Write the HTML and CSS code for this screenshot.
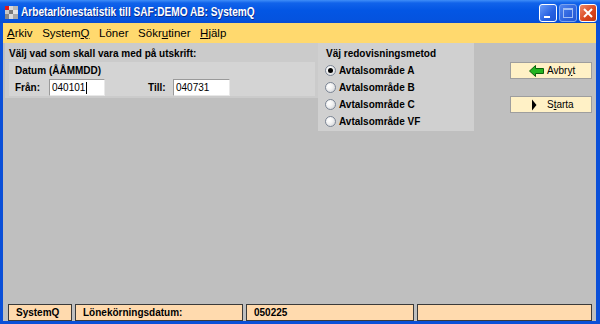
FILE: index.html
```html
<!DOCTYPE html>
<html lang="sv">
<head>
    <meta charset="UTF-8">
    <title>Arbetarlönestatistik till SAF:DEMO AB: SystemQ</title>
    <link rel="stylesheet" href="styles.css">
</head>
<body>

<div class="window">
    <div class="titlebar">
        <svg class="app-icon" width="13" height="13" viewBox="0 0 13 13">
            <rect x="0" y="0" width="13" height="13" fill="#9a9a9a"/>
            <rect x="0" y="0" width="4" height="4" fill="#e01818"/>
            <rect x="4" y="0" width="4" height="4" fill="#d8d8d8"/>
            <rect x="8" y="0" width="5" height="4" fill="#b8b8b8"/>
            <rect x="0" y="4" width="4" height="4" fill="#c8c8c8"/>
            <rect x="4" y="4" width="4" height="4" fill="#7a7a7a"/>
            <rect x="8" y="4" width="5" height="4" fill="#e4e4e4"/>
            <rect x="0" y="8" width="4" height="5" fill="#888"/>
            <rect x="4" y="8" width="4" height="5" fill="#dcdcdc"/>
            <rect x="8" y="8" width="5" height="5" fill="#a8a8a8"/>
        </svg>
        <span class="title">Arbetarlönestatistik till SAF:DEMO AB: SystemQ</span>
        <div class="caption-buttons">
            <span class="cbtn cbtn-min">
                <svg width="16" height="16" viewBox="0 0 16 16"><rect x="4" y="11" width="6" height="2" fill="#fff"/></svg>
            </span>
            <span class="cbtn cbtn-max">
                <svg width="16" height="16" viewBox="0 0 16 16"><rect x="3.5" y="3.5" width="9" height="9" fill="none" stroke="#9fbdf4" stroke-width="1"/><rect x="3.5" y="3.5" width="9" height="1.5" fill="#9fbdf4"/></svg>
            </span>
            <span class="cbtn cbtn-close">
                <svg width="16" height="16" viewBox="0 0 16 16"><path d="M4 4 L12 12 M12 4 L4 12" stroke="#fff" stroke-width="2"/></svg>
            </span>
        </div>
    </div>

    <div class="menubar">
        <span class="menu-item"><u>A</u>rkiv</span>
        <span class="menu-item">System<u>Q</u></span>
        <span class="menu-item">Löner</span>
        <span class="menu-item">Sökr<u>u</u>tiner</span>
        <span class="menu-item"><u>H</u>jälp</span>
    </div>

    <div class="content">
        <div class="panel panel-print">
            <div class="panel-title">Välj vad som skall vara med på utskrift:</div>
            <div class="date-box">
                <div class="box-title">Datum (ÅÅMMDD)</div>
                <div class="date-row">
                    <span class="label label-from">Från:</span>
                    <div class="field">040101<span class="caret"></span></div>
                    <span class="label label-to">Till:</span>
                    <div class="field field-to">040731</div>
                </div>
            </div>
        </div>

        <div class="panel panel-method">
            <div class="panel-title">Väj redovisningsmetod</div>
            <div class="radio-row"><span class="radio checked"></span>Avtalsområde A</div>
            <div class="radio-row"><span class="radio"></span>Avtalsområde B</div>
            <div class="radio-row"><span class="radio"></span>Avtalsområde C</div>
            <div class="radio-row"><span class="radio"></span>Avtalsområde VF</div>
        </div>

        <div class="actions">
            <div class="btn">
                <span class="btn-icon">
                    <svg width="15" height="12" viewBox="0 0 15 12"><polygon points="0.5,6 6.5,0.5 6.5,3.5 14.5,3.5 14.5,8.5 6.5,8.5 6.5,11.5" fill="#22b422" stroke="#0b620b" stroke-width="1"/></svg>
                </span>
                <span>Avbr<u>y</u>t</span>
            </div>
            <div class="btn">
                <span class="btn-icon">
                    <svg width="15" height="12" viewBox="0 0 15 12"><polygon points="3,0.5 7.5,6 3,11.5" fill="#000"/></svg>
                </span>
                <span>S<u>t</u>arta</span>
            </div>
        </div>
    </div>

    <div class="statusbar">
        <div class="status-cell cell-app">SystemQ</div>
        <div class="status-cell cell-label">Lönekörningsdatum:</div>
        <div class="status-cell cell-date">050225</div>
        <div class="status-cell cell-empty"></div>
    </div>
</div>

</body>
</html>
```

FILE: styles.css
```css
body {
    margin: 0;
    font-family: "Liberation Sans", Arial, sans-serif;
}

.window {
    width: 600px;
    height: 324px;
    display: flex;
    flex-direction: column;
    background: #0a4fd8;
    box-sizing: border-box;
    padding-bottom: 3px;
}

/* title bar */
.titlebar {
    height: 23px;
    flex-shrink: 0;
    display: flex;
    align-items: center;
    background: linear-gradient(#3f8ef8 0, #1163ea 3px, #0356e4 45%, #0453df 85%, #0a4bd0 100%);
    color: #fff;
}

.app-icon {
    margin-left: 5px;
    margin-top: 1px;
}

.title {
    margin-left: 3px;
    font-weight: bold;
    font-size: 12.5px;
    white-space: nowrap;
    transform: scaleX(0.81);
    transform-origin: left center;
    text-shadow: 1px 1px 0 #0a2a8a;
}

.caption-buttons {
    margin-left: auto;
    margin-right: 3px;
    margin-top: 3px;
    display: flex;
    gap: 2px;
}

.cbtn {
    width: 18px;
    height: 18px;
    box-sizing: border-box;
    border: 1px solid #fff;
    border-radius: 3px;
    display: flex;
    align-items: center;
    justify-content: center;
}

.cbtn-min {
    background: linear-gradient(135deg, #6a9cf8, #2661e2 60%, #1f55d4);
}

.cbtn-max {
    border-color: #7ba3ee;
    background: linear-gradient(135deg, #4f85ef, #2d63de 60%, #2458d2);
}

.cbtn-close {
    background: linear-gradient(135deg, #f08a6a, #d8441c 60%, #c2360f);
}

/* menu */
.menubar {
    height: 20px;
    flex-shrink: 0;
    margin: 0 4px 0 3px;
    background: #ffd96e;
    display: flex;
    align-items: center;
    gap: 9.6px;
    padding-left: 4px;
    font-size: 11.5px;
    color: #000;
}

/* main area */
.content {
    flex: 1;
    margin: 0 4px 0 3px;
    background: #bfbfbf;
    display: flex;
    align-items: flex-start;
    padding-left: 2px;
    font-size: 10px;
    font-weight: bold;
}

.panel {
    box-sizing: border-box;
    background: #cbcbcb;
}

.panel-title {
    line-height: 12px;
}

.panel-print {
    width: 313px;
    height: 55px;
    padding: 5px 3px 0 4px;
}

.panel-print .panel-title {
    margin-bottom: 2px;
}

.date-box {
    height: 34px;
    box-sizing: border-box;
    background: #d4d4d4;
    padding: 3px 0 0 6px;
}

.box-title {
    line-height: 12px;
    margin-bottom: 2px;
}

.date-row {
    display: flex;
    align-items: center;
    height: 17px;
}

.label-from {
    width: 34px;
}

.label-to {
    width: 25px;
    margin-left: 43px;
}

.field {
    width: 56px;
    height: 17px;
    box-sizing: border-box;
    background: #fff;
    border: 1px solid #9a9a9a;
    border-right-color: #e8e8e8;
    border-bottom-color: #e8e8e8;
    padding-left: 2px;
    font-weight: normal;
    line-height: 15px;
    display: flex;
    align-items: center;
}

.field-to {
    width: 57px;
}

.caret {
    display: inline-block;
    width: 1px;
    height: 12px;
    background: #000;
    margin-left: 1px;
}

.panel-method {
    width: 156px;
    height: 88px;
    padding: 5px 0 0 7px;
    background: #d0d0d0;
}

.panel-method .panel-title {
    margin-left: 1px;
    margin-bottom: 2px;
}

.radio-row {
    height: 17px;
    display: flex;
    align-items: center;
}

.radio {
    width: 11px;
    height: 11px;
    box-sizing: border-box;
    border-radius: 50%;
    border: 1px solid #7b8594;
    background: radial-gradient(circle at 35% 35%, #ffffff 0, #f2f2f2 40%, #c9ccd2 100%);
    margin-right: 3px;
    position: relative;
}

.radio.checked::after {
    content: "";
    position: absolute;
    left: 2px;
    top: 2px;
    width: 5px;
    height: 5px;
    border-radius: 50%;
    background: #000;
}

.actions {
    margin-left: 36px;
    padding-top: 19px;
    display: flex;
    flex-direction: column;
    gap: 17px;
}

.btn {
    width: 82px;
    height: 17px;
    box-sizing: border-box;
    background: #fff1c6;
    border: 1px solid #9e9e9e;
    display: flex;
    align-items: center;
    padding-left: 18px;
    font-weight: normal;
    font-size: 10px;
}

.btn-icon {
    width: 15px;
    height: 12px;
    margin-right: 3px;
    display: flex;
}

/* status bar */
.statusbar {
    height: 19px;
    flex-shrink: 0;
    margin: 0 4px 0 3px;
    background: #bfbfbf;
    box-sizing: border-box;
    padding: 2px 0 0 5px;
    display: flex;
    gap: 3px;
}

.status-cell {
    height: 17px;
    box-sizing: border-box;
    background: #ffdaae;
    border: 1px solid #3a3a3a;
    font-size: 10px;
    font-weight: bold;
    line-height: 15px;
    padding-left: 7px;
}

.cell-app {
    width: 64px;
}

.cell-label,
.cell-date {
    width: 168px;
}

.cell-empty {
    width: 175px;
}
```
